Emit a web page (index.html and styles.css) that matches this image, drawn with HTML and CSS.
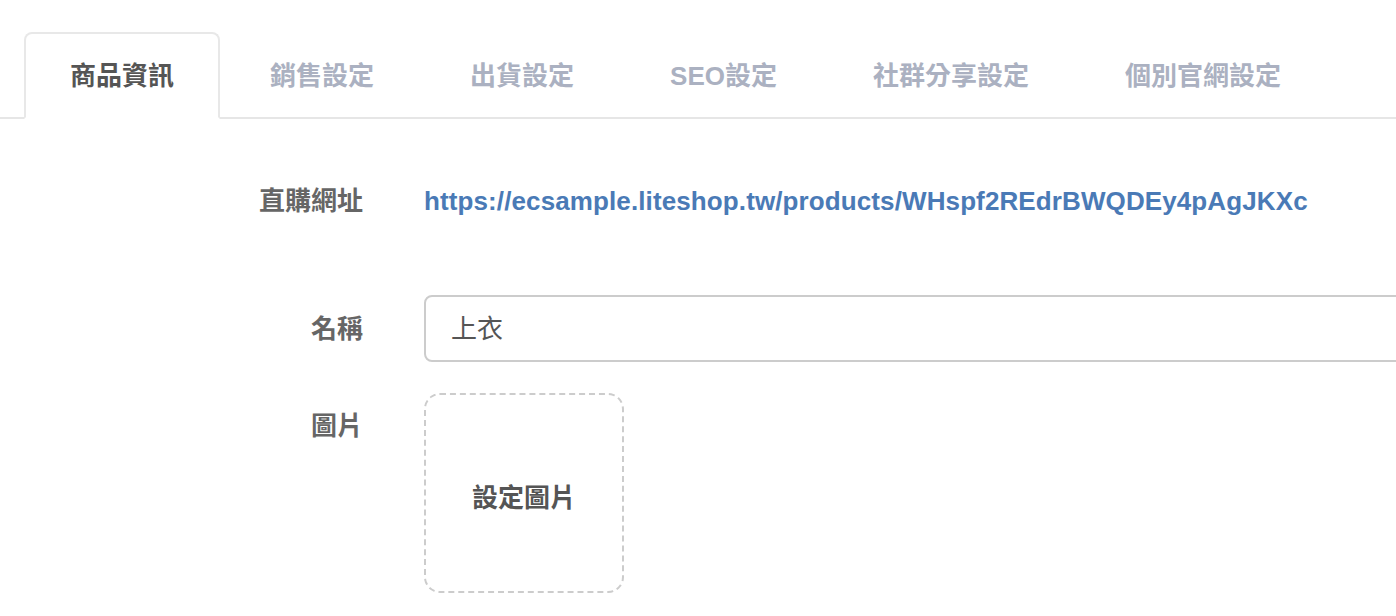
FILE: index.html
```html
<!DOCTYPE html>
<html lang="zh-Hant">
<head>
<meta charset="utf-8">
<title>商品資訊</title>
<link rel="stylesheet" href="styles.css">
</head>
<body>
<div class="page">
  <ul class="tabs">
    <li class="tab active">商品資訊</li>
    <li class="tab">銷售設定</li>
    <li class="tab">出貨設定</li>
    <li class="tab">SEO設定</li>
    <li class="tab">社群分享設定</li>
    <li class="tab">個別官網設定</li>
  </ul>
  <div class="form">
    <div class="row row-url">
      <div class="label">直購網址</div>
      <div class="value"><a class="link" href="#">https://ecsample.liteshop.tw/products/WHspf2REdrBWQDEy4pAgJKXc</a></div>
    </div>
    <div class="row row-name">
      <div class="label">名稱</div>
      <div class="value"><div class="input">上衣</div></div>
    </div>
    <div class="row row-image">
      <div class="label label-top">圖片</div>
      <div class="value"><div class="image-box">設定圖片</div></div>
    </div>
  </div>
</div>
</body>
</html>
```
FILE: styles.css
```css
html, body {
  margin: 0;
  padding: 0;
  background: #fff;
  overflow: hidden;
}
body {
  font-family: "Liberation Sans", "Noto Sans CJK TC", sans-serif;
  font-size: 26px;
  color: #555;
}
.page {
  width: 1396px;
  height: 616px;
  overflow: hidden;
}
.tabs {
  list-style: none;
  margin: 32px 0 0 0;
  padding: 0 0 0 24px;
  display: flex;
  border-bottom: 2px solid #e6e6e6;
  height: 85px;
}
.tab {
  box-sizing: border-box;
  height: 87px;
  padding: 0 44px;
  margin-right: 4px;
  border: 2px solid transparent;
  border-radius: 8px 8px 0 0;
  display: flex;
  align-items: center;
  font-weight: bold;
  color: #abb1c1;
  line-height: 36px;
  white-space: nowrap;
}
.tab.active {
  color: #555;
  border-color: #e8e8e8;
  border-bottom-color: #fff;
  background: #fff;
}
.form {
  display: flex;
  flex-direction: column;
  margin-top: 64px;
}
.row {
  display: grid;
  grid-template-columns: 363px 1fr;
  column-gap: 61px;
  line-height: 36px;
}
.row-name {
  margin-top: 76px;
  align-items: center;
}
.row-image {
  margin-top: 31px;
  align-items: start;
}
.label {
  text-align: right;
  font-weight: bold;
  color: #666;
  white-space: nowrap;
}
.label-top {
  padding-top: 15px;
}
.link {
  color: #4a7ab6;
  font-weight: bold;
  text-decoration: none;
  white-space: nowrap;
  letter-spacing: 0.11px;
}
.input {
  box-sizing: border-box;
  width: 1100px;
  height: 67px;
  border: 2px solid #cccccc;
  border-radius: 8px;
  padding: 0 25px;
  display: flex;
  align-items: center;
  color: #555;
}
.image-box {
  box-sizing: border-box;
  width: 200px;
  height: 200px;
  padding-top: 9px;
  border: 2px dashed #cccccc;
  border-radius: 16px;
  display: flex;
  align-items: center;
  justify-content: center;
  font-weight: bold;
  color: #555;
}
```
